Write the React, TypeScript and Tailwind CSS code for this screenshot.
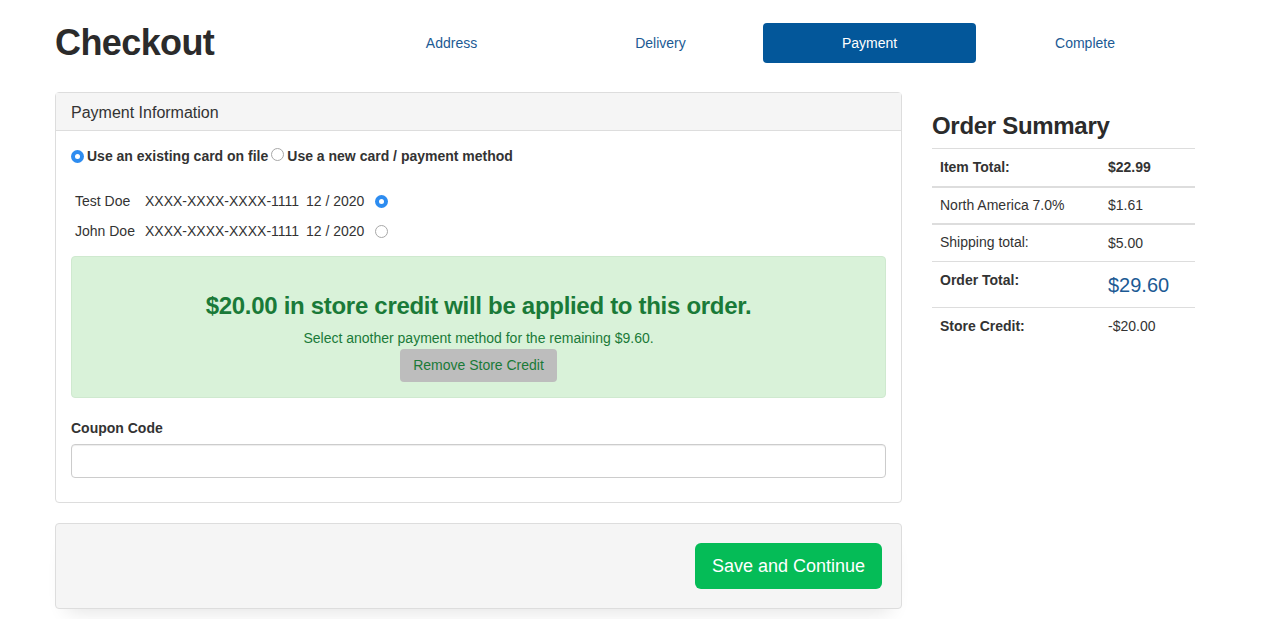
import React from "react";

const steps = [
  { label: "Address", w: "w-[213px]" },
  { label: "Delivery", w: "w-[205px]" },
  { label: "Payment", w: "w-[213px]" },
  { label: "Complete", w: "w-[218px]" },
];

const cards = [
  { name: "Test Doe", number: "XXXX-XXXX-XXXX-1111", exp: "12 / 2020", selected: true },
  { name: "John Doe", number: "XXXX-XXXX-XXXX-1111", exp: "12 / 2020", selected: false },
];

const Radio = ({ checked }: { checked: boolean }) =>
  checked ? (
    <span className="inline-flex h-[13px] w-[13px] items-center justify-center rounded-full bg-[#2d8cf0]">
      <span className="h-[5px] w-[5px] rounded-full bg-white" />
    </span>
  ) : (
    <span className="inline-block h-[13px] w-[13px] rounded-full border border-[#a8a8a8] bg-white" />
  );

const App = () => {
  return (
    <div className="min-h-[619px] bg-white pl-[55px] font-['Liberation_Sans',Arial,sans-serif] text-[#333]">
      {/* header */}
      <div className="flex h-[92px] items-start">
        <h1 className="mt-[21px] w-[290px] text-[36px] leading-[44px] font-bold tracking-[-0.6px] text-[#2b2b2b]">
          Checkout
        </h1>
        <div className="mt-[23px] flex">
          {steps.map((step) => (
            <div
              key={step.label}
              className={`flex h-[40px] ${step.w} items-center justify-center rounded-[4px] text-[14px] ${
                step.label === "Payment" ? "bg-[#03579a] text-white" : "text-[#1c5a94]"
              }`}
            >
              {step.label}
            </div>
          ))}
        </div>
      </div>

      <div className="flex">
        {/* left column */}
        <div className="w-[847px]">
          <div className="rounded-[4px] border border-[#ddd] bg-white">
            <div className="flex h-[38px] items-center border-b border-[#ddd] bg-[#f5f5f5] px-[15px] pt-[2px] text-[16px] text-[#333]">
              Payment Information
            </div>
            <div className="px-[15px] pt-[15px] pb-[24px]">
              <div className="flex items-center text-[14px] font-bold text-[#333]">
                <Radio checked />
                <span className="ml-[3px]">Use an existing card on file</span>
                <span className="ml-[3px]">
                  <Radio checked={false} />
                </span>
                <span className="ml-[3px]">Use a new card / payment method</span>
              </div>

              <div className="mt-[25px] flex flex-col gap-[12px] pl-[4px] text-[14px]">
                {cards.map((c) => (
                  <div key={c.name} className="flex h-[18px] items-center">
                    <span className="w-[70px]">{c.name}</span>
                    <span className="w-[161px]">{c.number}</span>
                    <span className="w-[69px]">{c.exp}</span>
                    <Radio checked={c.selected} />
                  </div>
                ))}
              </div>

              <div className="mt-[16px] flex h-[142px] flex-col items-center rounded-[4px] border border-[#cfe9cf] bg-[#d9f2d9] pt-[34px] text-[#1a7a38]">
                <div className="text-[24px] leading-[30px] font-bold tracking-[-0.3px]">
                  $20.00 in store credit will be applied to this order.
                </div>
                <div className="mt-[8px] text-[14px] leading-[18px]">
                  Select another payment method for the remaining $9.60.
                </div>
                <button className="mt-[2px] h-[33px] rounded-[4px] bg-[#bdbdbd] px-[13px] text-[14px] text-[#1a7a38]">
                  Remove Store Credit
                </button>
              </div>

              <div className="mt-[21px] text-[14px] leading-[18px] font-bold">Coupon Code</div>
              <input
                type="text"
                className="mt-[7px] block h-[34px] w-full rounded-[4px] border border-[#ccc] px-3 text-[14px] shadow-[inset_0_1px_1px_rgba(0,0,0,0.075)] outline-none"
              />
            </div>
          </div>

          <div className="mt-[20px] flex h-[86px] items-center justify-end rounded-[4px] border border-[#ddd] bg-[#f5f5f5] pr-[19px] shadow-[0_14px_20px_-12px_rgba(0,0,0,0.12)]">
            <button className="h-[46px] w-[187px] rounded-[6px] bg-[#05bc57] text-[18px] text-white">
              Save and Continue
            </button>
          </div>
        </div>

        {/* order summary */}
        <div className="ml-[30px] w-[263px]">
          <h3 className="mt-[19px] h-[37px] text-[24px] leading-[30px] font-bold tracking-[-0.3px] text-[#2b2b2b]">
            Order Summary
          </h3>
          <table className="w-full text-[14px]">
            <tbody>
              <tr className="h-[38px] border-t border-b-2 border-[#ddd]">
                <td className="w-[176px] pl-[8px] font-bold">Item Total:</td>
                <td className="font-bold">$22.99</td>
              </tr>
              <tr className="h-[37px] border-b-2 border-[#ddd]">
                <td className="pl-[8px]">North America 7.0%</td>
                <td>$1.61</td>
              </tr>
              <tr className="h-[38px] border-b border-[#ddd]">
                <td className="pl-[8px]">Shipping total:</td>
                <td className="pt-[2px]">$5.00</td>
              </tr>
              <tr className="h-[46px] border-b border-[#ddd]">
                <td className="pt-[8px] pl-[8px] align-top font-bold">Order Total:</td>
                <td className="text-[20px] text-[#1c5a94]">$29.60</td>
              </tr>
              <tr className="h-[38px]">
                <td className="pl-[8px] font-bold">Store Credit:</td>
                <td>-$20.00</td>
              </tr>
            </tbody>
          </table>
        </div>
      </div>
    </div>
  );
};

export default App;
